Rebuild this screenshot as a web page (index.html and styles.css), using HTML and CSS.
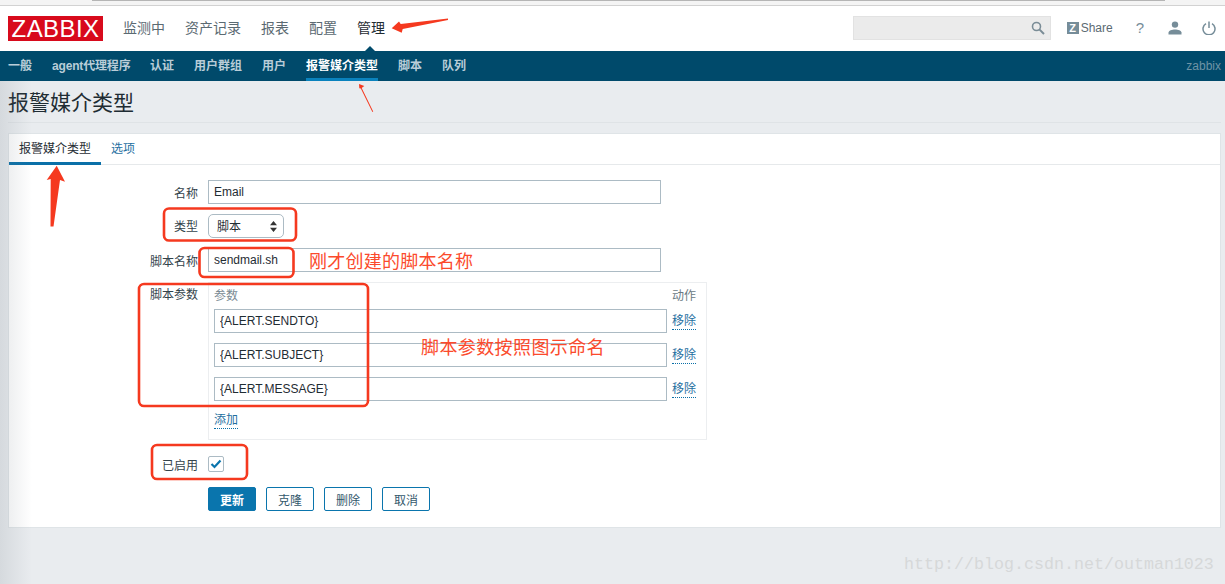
FILE: index.html
```html
<!DOCTYPE html>
<html lang="zh-CN">
<head>
<meta charset="utf-8">
<title>报警媒介类型</title>
<link rel="stylesheet" href="styles.css">
</head>
<body>
<div class="browser-edge"><div class="browser-scroll"></div></div>
<header class="top">
  <div class="logo">ZABBIX</div>
  <nav class="main-nav">
    <a>监测中</a><a>资产记录</a><a>报表</a><a>配置</a><a class="on">管理</a>
  </nav>
  <div class="top-right">
    <div class="search">
      <svg class="ico-search" width="14" height="14" viewBox="0 0 14 14"><circle cx="5.500" cy="5.500" r="4" fill="none" stroke="#7a8c96" stroke-width="1.600"/><path d="M8.600 8.600 13 13" stroke="#7a8c96" stroke-width="2"/></svg>
    </div>
    <div class="share"><span class="share-z">Z</span><span>Share</span></div>
    <span class="help">?</span>
    <svg class="ico-user" width="14" height="14" viewBox="0 0 14 14"><circle cx="7" cy="3.600" r="3.200" fill="#768d99"/><path d="M0.500 13.500V11.600C0.500 9.600 4 8.400 7 8.400s6.500 1.200 6.500 3.200v1.900z" fill="#768d99"/></svg>
    <svg class="ico-power" width="14" height="14" viewBox="0 0 14 14"><path d="M4 2.600A6 6 0 1 0 10 2.600" fill="none" stroke="#768d99" stroke-width="1.500"/><path d="M7 0.500V7" stroke="#768d99" stroke-width="1.500"/></svg>
  </div>
</header>
<nav class="sub-nav">
  <a>一般</a><a class="tight">agent代理程序</a><a>认证</a><a>用户群组</a><a>用户</a><a class="on">报警媒介类型</a><a>脚本</a><a>队列</a>
  <span class="server">zabbix</span>
</nav>
<main class="page">
  <h1 class="title">报警媒介类型</h1>
  <section class="panel">
    <div class="tabs"><a class="tab on">报警媒介类型</a><a class="tab">选项</a></div>
    <form class="form">
      <label class="lbl">名称</label>
      <input class="field wide" value="Email">
      <label class="lbl lbl-type">类型</label>
      <div class="select"><span>脚本</span>
        <svg width="7" height="11" viewBox="0 0 7 11"><path d="M3.500 0 7 4.200H0zM3.500 11 0 6.800h7z" fill="#333"/></svg>
      </div>
      <label class="lbl">脚本名称</label>
      <input class="field wide" value="sendmail.sh">
      <label class="lbl lbl-top">脚本参数</label>
      <div class="params">
        <div class="p-head"><span>参数</span><span class="p-act">动作</span></div>
        <div class="p-row"><input class="field p-input" value="{ALERT.SENDTO}"><a class="link">移除</a></div>
        <div class="p-row"><input class="field p-input" value="{ALERT.SUBJECT}"><a class="link">移除</a></div>
        <div class="p-row"><input class="field p-input" value="{ALERT.MESSAGE}"><a class="link">移除</a></div>
        <div class="p-add"><a class="link">添加</a></div>
      </div>
      <label class="lbl lbl-check">已启用</label>
      <div class="check-wrap"><span class="check">
        <svg width="12" height="10" viewBox="0 0 12 10"><path d="M1.500 5 4.500 8 10.500 1.500" fill="none" stroke="#0a75ad" stroke-width="2.200"/></svg>
      </span></div>
      <div class="actions">
        <button type="button" class="btn primary">更新</button>
        <button type="button" class="btn">克隆</button>
        <button type="button" class="btn">删除</button>
        <button type="button" class="btn">取消</button>
      </div>
    </form>
  </section>
</main>
<div class="vignette"></div>
<svg class="marks" width="1225" height="584" viewBox="0 0 1225 584">
  <g fill="#f5391f">
    <path d="M448 18.500 400.700 24 399 21.500 391.700 28.300 401.700 32.700 402.700 29 448 20z"/>
    <path d="M373.200 111.500 361.700 88 364.300 86 359 84 359.300 88.300 360.800 88.600 372.400 112z"/>
    <path d="M53.500 226.500 60 180 65 181.700 56.700 165.700 46.700 180 50.700 179 50.500 226.500z"/>
  </g>
  <g fill="none" stroke="#f5391f" stroke-width="2.600">
    <rect x="164" y="208.500" width="132" height="32" rx="5"/>
    <rect x="199.500" y="248" width="94" height="29" rx="5"/>
    <rect x="139" y="284" width="229" height="122" rx="5"/>
    <rect x="152" y="445" width="95" height="34" rx="5"/>
  </g>
</svg>
<div class="note note-a">刚才创建的脚本名称</div>
<div class="note note-b">脚本参数按照图示命名</div>
<div class="watermark">http://blog.csdn.net/outman1023</div>
</body>
</html>
```

FILE: styles.css
```css
* { box-sizing: border-box; }
html, body { margin: 0; padding: 0; }
body {
  position: relative;
  width: 1225px;
  height: 584px;
  overflow: hidden;
  background: #e9ecef;
  font-family: "Liberation Sans", "Noto Sans CJK SC", sans-serif;
  font-size: 12px;
  color: #1f2c33;
}
.browser-edge {
  height: 6px;
  background: #f4f4f4;
  border-bottom: 1px solid #d2d2d2;
}
.browser-scroll {
  height: 1px;
  margin: 0 60px 0 92px;
  background: #b5b5b5;
}
.top {
  display: flex;
  align-items: center;
  height: 45px;
  padding: 0 8px;
  background: #fff;
}
.logo {
  width: 95px;
  height: 25px;
  background: #d80a1c;
  color: #fff;
  font-size: 24px;
  line-height: 25px;
  text-align: center;
  letter-spacing: 0.4px;
}
.main-nav {
  display: flex;
  gap: 20px;
  margin: 0 0 4px 20px;
  font-size: 14px;
  color: #5b6a72;
}
.main-nav .on { color: #1f2c33; position: relative; }
.main-nav .on::after {
  content: "";
  position: absolute;
  left: 5px;
  bottom: -17px;
  border: 8px solid transparent;
  border-top: 0;
  border-bottom-color: #004a6b;
}
.top-right {
  display: flex;
  align-items: center;
  margin-left: auto;
  padding-right: 1px;
}
.search {
  display: flex;
  align-items: center;
  justify-content: flex-end;
  width: 198px;
  height: 24px;
  margin-bottom: 2px;
  padding-right: 5px;
  background: #ebebeb;
  border: 1px solid #e2e2e2;
}
.share {
  display: flex;
  align-items: center;
  gap: 2px;
  margin: 0 0 2px 16px;
  color: #5b6a72;
}
.share-z {
  width: 12px;
  height: 12px;
  background: #768d99;
  color: #fff;
  font-size: 11px;
  font-weight: bold;
  line-height: 12px;
  text-align: center;
}
.help { margin: 0 0 2px 23px; font-size: 15px; color: #768d99; }
.ico-user { margin: 0 0 2px 24px; }
.ico-power { margin: 0 0 2px 20px; }
.sub-nav {
  display: flex;
  align-items: center;
  gap: 20px;
  height: 30px;
  padding: 0 4px 0 8px;
  background: #004a6b;
  color: #b9cdd8;
  font-weight: bold;
  white-space: nowrap;
}
.sub-nav a { height: 30px; line-height: 31px; }
.sub-nav .tight { letter-spacing: -0.17px; width: 78px; }
.sub-nav .on {
  color: #fff;
  border-bottom: 3px solid #0a82bd;
}
.server { margin-left: auto; color: #6f94a6; font-weight: normal; }
.page { padding: 0 4px 0 8px; }
.title {
  height: 42px;
  margin: 0 0 10px;
  border-bottom: 1px solid #dfe3e6;
  font-size: 21px;
  font-weight: normal;
  line-height: 44px;
  color: #1f2c33;
}
.panel {
  height: 395px;
  background: #fff;
  border: 1px solid #dfe4e7;
}
.tabs {
  display: flex;
  height: 31px;
  border-bottom: 1px solid #e6e9eb;
}
.tab {
  height: 31px;
  padding: 0 10px;
  line-height: 31px;
  color: #1f6f9f;
}
.tab.on {
  color: #1f2c33;
  border-bottom: 3px solid #0a70a8;
}
.form {
  display: grid;
  grid-template-columns: 189px 1fr;
  column-gap: 10px;
  row-gap: 10px;
  padding-top: 15px;
  align-items: center;
}
.lbl { text-align: right; color: #33434b; }
.lbl-type { padding-bottom: 2px; }
.lbl-top { align-self: start; padding-top: 3px; }
.lbl-check { padding-top: 6px; }
.field {
  display: block;
  height: 24px;
  padding: 0 5px;
  border: 1px solid #acbbc4;
  background: #fff;
  color: #1f2c33;
  font: 12px "Liberation Sans", "Noto Sans CJK SC", sans-serif;
}
.wide { width: 453px; }
.select {
  display: flex;
  align-items: center;
  justify-content: space-between;
  width: 76px;
  height: 24px;
  padding: 0 6px 0 8px;
  border: 1px solid #acbbc4;
  border-radius: 5px;
  color: #1f2c33;
}
.select span { padding-bottom: 2px; }
.params {
  width: 499px;
  height: 158px;
  padding: 0 6px 0 5px;
  border: 1px solid #eceef0;
}
.p-head {
  display: flex;
  justify-content: space-between;
  height: 26px;
  padding: 3px 4px 0 0;
  color: #7a8a93;
}
.p-act { color: #6a7a83; }
.p-row {
  display: flex;
  align-items: center;
  gap: 5px;
  height: 24px;
  margin-bottom: 10px;
}
.p-input { width: 453px; flex: none; }
.link {
  color: #1f6f9f;
  border-bottom: 1px dotted #0a70a8;
  line-height: 15px;
}
.p-row .link { margin-top: 2px; }
.p-add { padding-top: 2px; }
.p-add .link { display: inline-block; }
.check-wrap { padding-top: 6px; height: 23px; }
.check {
  display: flex;
  align-items: center;
  justify-content: center;
  width: 16px;
  height: 16px;
  border: 1px solid #acbbc4;
  border-radius: 2px;
}
.actions {
  grid-column: 2;
  display: flex;
  gap: 10px;
  margin-top: 4px;
}
.btn {
  width: 48px;
  height: 24px;
  padding: 0;
  border: 1px solid #0a75ad;
  border-radius: 2px;
  background: #fff;
  color: #33586c;
  font: 12px "Liberation Sans", "Noto Sans CJK SC", sans-serif;
}
.btn.primary { background: #0a75ad; color: #fff; font-weight: bold; }
.vignette {
  position: absolute;
  left: 0;
  top: 81px;
  width: 32px;
  height: 503px;
  background: linear-gradient(90deg, rgba(110, 120, 130, 0.16), rgba(110, 120, 130, 0));
  pointer-events: none;
}
.marks { position: absolute; left: 0; top: 0; pointer-events: none; }
.note {
  position: absolute;
  color: #fb4a2c;
  font-size: 18px;
  letter-spacing: 0.25px;
  line-height: 24px;
  white-space: nowrap;
}
.note-a { left: 309px; top: 250px; }
.note-b { left: 421px; top: 336px; letter-spacing: 0.4px; }
.watermark {
  position: absolute;
  left: 904px;
  top: 555px;
  color: #d6d8d9;
  font-family: "Liberation Mono", monospace;
  font-size: 16.67px;
  line-height: 20px;
  white-space: nowrap;
}
```
